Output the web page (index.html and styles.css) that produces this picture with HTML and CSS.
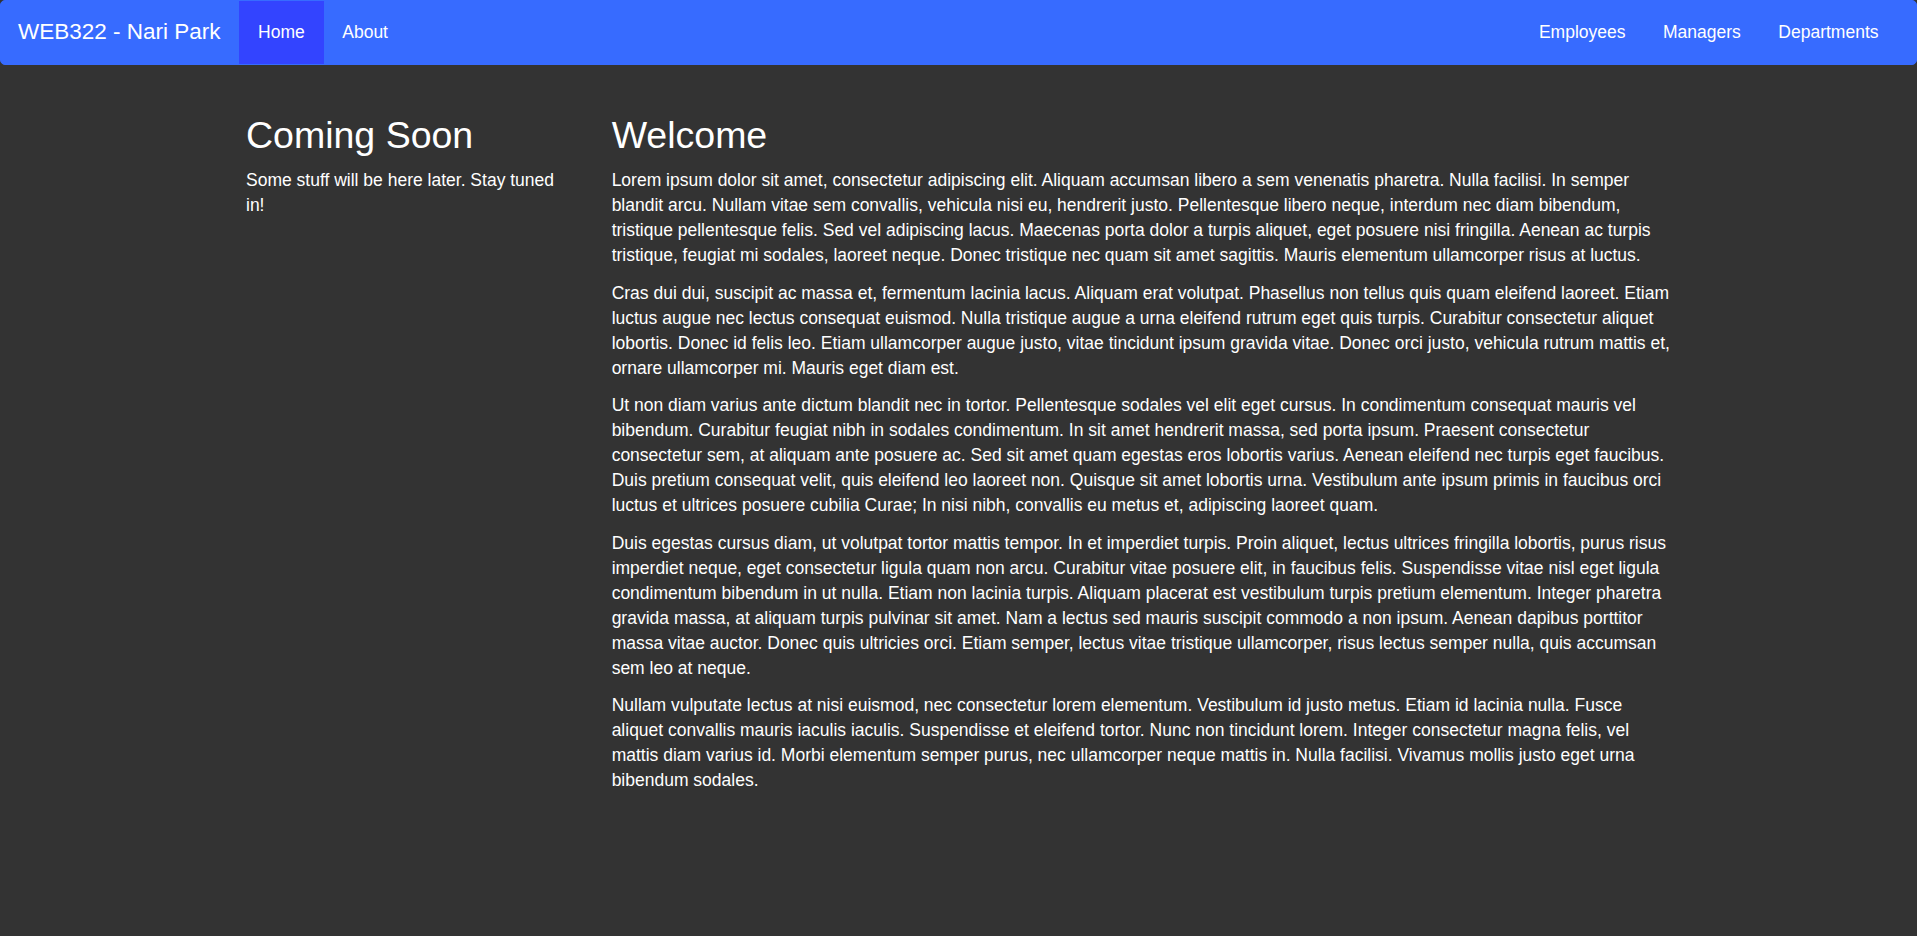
FILE: index.html
```html
<!DOCTYPE html>
<html lang="en">
<head>
<meta charset="utf-8">
<title>WEB322 - Nari Park</title>
<link rel="stylesheet" href="styles.css">
</head>
<body>
<nav class="navbar">
  <a class="brand" href="#">WEB322 - Nari Park</a>
  <ul class="nav">
    <li><a class="nav-link active" href="#">Home</a></li>
    <li><a class="nav-link" href="#">About</a></li>
  </ul>
  <ul class="nav nav-right">
    <li><a class="nav-link" href="#">Employees</a></li>
    <li><a class="nav-link" href="#">Managers</a></li>
    <li><a class="nav-link" href="#">Departments</a></li>
  </ul>
</nav>
<main class="container">
  <aside class="col">
    <h2 class="heading">Coming Soon</h2>
    <p class="text">Some stuff will be here later. Stay tuned in!</p>
  </aside>
  <section class="col">
    <h2 class="heading">Welcome</h2>
    <p class="text">Lorem ipsum dolor sit amet, consectetur adipiscing elit. Aliquam accumsan libero a sem venenatis pharetra. Nulla facilisi. In semper blandit arcu. Nullam vitae sem convallis, vehicula nisi eu, hendrerit justo. Pellentesque libero neque, interdum nec diam bibendum, tristique pellentesque felis. Sed vel adipiscing lacus. Maecenas porta dolor a turpis aliquet, eget posuere nisi fringilla. Aenean ac turpis tristique, feugiat mi sodales, laoreet neque. Donec tristique nec quam sit amet sagittis. Mauris elementum ullamcorper risus at luctus.</p>
    <p class="text">Cras dui dui, suscipit ac massa et, fermentum lacinia lacus. Aliquam erat volutpat. Phasellus non tellus quis quam eleifend laoreet. Etiam luctus augue nec lectus consequat euismod. Nulla tristique augue a urna eleifend rutrum eget quis turpis. Curabitur consectetur aliquet lobortis. Donec id felis leo. Etiam ullamcorper augue justo, vitae tincidunt ipsum gravida vitae. Donec orci justo, vehicula rutrum mattis et, ornare ullamcorper mi. Mauris eget diam est.</p>
    <p class="text">Ut non diam varius ante dictum blandit nec in tortor. Pellentesque sodales vel elit eget cursus. In condimentum consequat mauris vel bibendum. Curabitur feugiat nibh in sodales condimentum. In sit amet hendrerit massa, sed porta ipsum. Praesent consectetur consectetur sem, at aliquam ante posuere ac. Sed sit amet quam egestas eros lobortis varius. Aenean eleifend nec turpis eget faucibus. Duis pretium consequat velit, quis eleifend leo laoreet non. Quisque sit amet lobortis urna. Vestibulum ante ipsum primis in faucibus orci luctus et ultrices posuere cubilia Curae; In nisi nibh, convallis eu metus et, adipiscing laoreet quam.</p>
    <p class="text">Duis egestas cursus diam, ut volutpat tortor mattis tempor. In et imperdiet turpis. Proin aliquet, lectus ultrices fringilla lobortis, purus risus imperdiet neque, eget consectetur ligula quam non arcu. Curabitur vitae posuere elit, in faucibus felis. Suspendisse vitae nisl eget ligula condimentum bibendum in ut nulla. Etiam non lacinia turpis. Aliquam placerat est vestibulum turpis pretium elementum. Integer pharetra gravida massa, at aliquam turpis pulvinar sit amet. Nam a lectus sed mauris suscipit commodo a non ipsum. Aenean dapibus porttitor massa vitae auctor. Donec quis ultricies orci. Etiam semper, lectus vitae tristique ullamcorper, risus lectus semper nulla, quis accumsan sem leo at neque.</p>
    <p class="text">Nullam vulputate lectus at nisi euismod, nec consectetur lorem elementum. Vestibulum id justo metus. Etiam id lacinia nulla. Fusce aliquet convallis mauris iaculis iaculis. Suspendisse et eleifend tortor. Nunc non tincidunt lorem. Integer consectetur magna felis, vel mattis diam varius id. Morbi elementum semper purus, nec ullamcorper neque mattis in. Nulla facilisi. Vivamus mollis justo eget urna bibendum sodales.</p>
  </section>
</main>
</body>
</html>
```
FILE: styles.css
```css
* { box-sizing: border-box; }

html, body {
  margin: 0;
  padding: 0;
}

body {
  background: #333333;
  color: #ffffff;
  font-family: "Liberation Sans", Arial, Helvetica, sans-serif;
  font-size: 17.5px;
  line-height: 25px;
}

.navbar {
  display: flex;
  align-items: stretch;
  background: #376bff;
  border: 1px solid #376bff;
  border-radius: 5px;
  padding: 0 18.75px 0 0;
  height: 64.5px;
}

.brand {
  display: block;
  padding: 0 18.75px 0 17px;
  font-size: 22.5px;
  line-height: 62.5px;
  color: #ffffff;
  text-decoration: none;
}

.nav {
  display: flex;
  list-style: none;
  margin: 0;
  padding: 0;
}

.nav-right {
  margin-left: auto;
}

.nav-link {
  display: block;
  padding: 0 18.75px;
  line-height: 62.5px;
  color: #ffffff;
  text-decoration: none;
}

.nav-link.active {
  background: #3344ff;
}

.container {
  width: 1462.5px;
  margin: 25px auto 0;
  display: grid;
  grid-template-columns: 1fr 3fr;
}

.col {
  padding: 0 18.75px;
  min-width: 0;
}

.heading {
  font-size: 37.5px;
  font-weight: 500;
  line-height: 1.1;
  margin: 25px 0 12.5px;
}

.text {
  margin: 0 0 12.5px;
}
```
